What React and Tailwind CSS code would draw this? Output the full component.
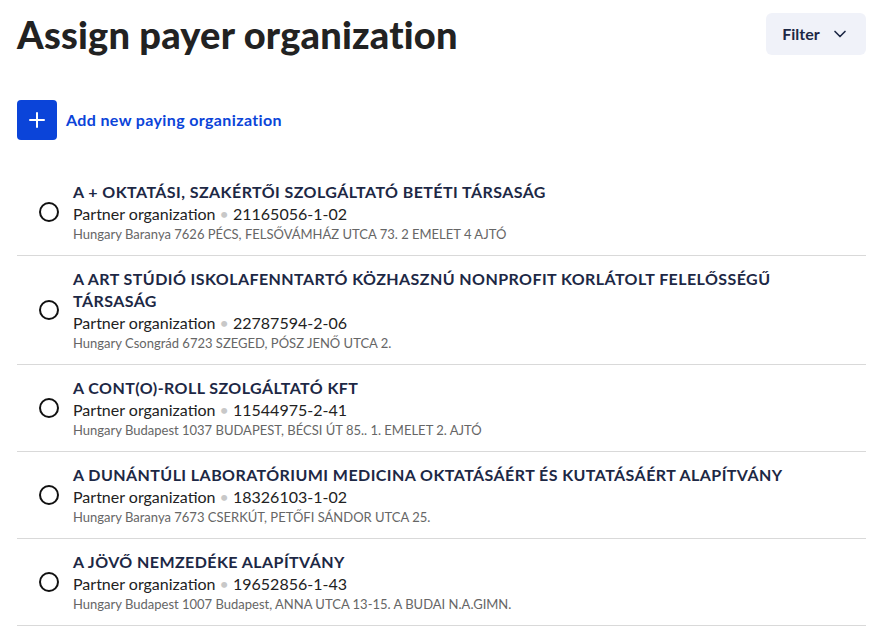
import { ChevronDown, Plus } from 'lucide-react'

const ORGS = [
  {
    name: 'A + OKTATÁSI, SZAKÉRTŐI SZOLGÁLTATÓ BETÉTI TÁRSASÁG',
    tax: '21165056-1-02',
    address: 'Hungary Baranya 7626 PÉCS, FELSŐVÁMHÁZ UTCA 73. 2 EMELET 4 AJTÓ',
  },
  {
    name: 'A ART STÚDIÓ ISKOLAFENNTARTÓ KÖZHASZNÚ NONPROFIT KORLÁTOLT FELELŐSSÉGŰ TÁRSASÁG',
    tax: '22787594-2-06',
    address: 'Hungary Csongrád 6723 SZEGED, PÓSZ JENŐ UTCA 2.',
  },
  {
    name: 'A CONT(O)-ROLL SZOLGÁLTATÓ KFT',
    tax: '11544975-2-41',
    address: 'Hungary Budapest 1037 BUDAPEST, BÉCSI ÚT 85.. 1. EMELET 2. AJTÓ',
  },
  {
    name: 'A DUNÁNTÚLI LABORATÓRIUMI MEDICINA OKTATÁSÁÉRT ÉS KUTATÁSÁÉRT ALAPÍTVÁNY',
    tax: '18326103-1-02',
    address: 'Hungary Baranya 7673 CSERKÚT, PETŐFI SÁNDOR UTCA 25.',
  },
  {
    name: 'A JÖVŐ NEMZEDÉKE ALAPÍTVÁNY',
    tax: '19652856-1-43',
    address: 'Hungary Budapest 1007 Budapest, ANNA UTCA 13-15. A BUDAI N.A.GIMN.',
  },
]

function OrgRow({ org }) {
  return (
    <div className="flex items-center border-b border-[#d9d9d9] py-3">
      <div className="flex w-[56px] shrink-0 justify-center">
        <span className="ml-[8px] block h-[20px] w-[20px] rounded-full border-2 border-[#111]" />
      </div>
      <div className="min-w-0 flex-1 pr-[80px]">
        <div className="text-[16px] font-bold leading-[22px] tracking-[0.43px] text-[#1d2845]">{org.name}</div>
        <div className="text-[16px] leading-[22px] text-[#222]">
          Partner organization <span className="text-[#c8c8c8]">•</span> {org.tax}
        </div>
        <div className="text-[13px] leading-[18px] text-[#666]">{org.address}</div>
      </div>
    </div>
  )
}

export default function App() {
  return (
    <div className="min-h-[632px] bg-white pl-[17px] pr-[5px] pt-[13px] font-['Lato',sans-serif]">
      {/* Header */}
      <div className="flex items-start justify-between">
        <h1 className="text-[38px] font-black leading-[42px] tracking-[0.2px] text-[#222]">
          Assign payer organization
        </h1>
        <button className="flex h-[42px] w-[100px] items-center justify-center gap-[10px] rounded-[6px] bg-[#f0f2f9] text-[16px] font-bold text-[#1d2845]">
          Filter <ChevronDown size={20} strokeWidth={2} />
        </button>
      </div>

      {/* Add new */}
      <div className="mt-[45px] flex items-center gap-[9px]">
        <span className="flex h-[40px] w-[40px] items-center justify-center rounded-[4px] bg-[#0b44d9] text-white">
          <Plus size={24} strokeWidth={2} />
        </span>
        <span className="text-[16px] font-bold tracking-[0.37px] text-[#0b44d9]">Add new paying organization</span>
      </div>

      {/* List */}
      <div className="mt-[29px]">
        {ORGS.map(o => <OrgRow key={o.tax} org={o} />)}
      </div>
    </div>
  )
}
